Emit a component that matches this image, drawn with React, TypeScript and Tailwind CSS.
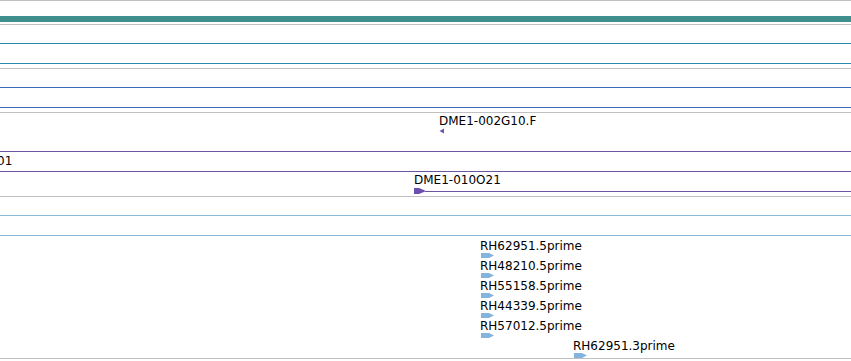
import React from "react";

const rows = [
  { label: "RH62951.5prime", x: "ml-[481px]" },
  { label: "RH48210.5prime", x: "ml-[481px]" },
  { label: "RH55158.5prime", x: "ml-[481px]" },
  { label: "RH44339.5prime", x: "ml-[481px]" },
  { label: "RH57012.5prime", x: "ml-[481px]" },
  { label: "RH62951.3prime", x: "ml-[574px]" },
];

function BlueArrow() {
  return (
    <svg width="14" height="5" viewBox="0 0 14 5" className="block">
      <polygon points="0,0 8,0 13,2.5 8,5 0,5" fill="#82b4de" />
    </svg>
  );
}

export default function App() {
  return (
    <div
      className="w-[851px] h-[361px] bg-white overflow-hidden flex flex-col text-[12px] leading-[14px] text-black"
      style={{ fontFamily: '"DejaVu Sans", sans-serif' }}
    >
      <div className="h-px bg-[#c0c0c0]" />
      <div className="pt-[15px] pb-[2px]">
        <div className="h-[6px] bg-[#3f8f8f]" />
      </div>
      <div className="h-px bg-[#c0c0c0]" />

      <div className="pt-[18px] pb-[4px]">
        <div className="h-[21px] border-y border-[#2a8caa]" />
      </div>
      <div className="h-px bg-[#c0c0c0]" />

      <div className="pt-[18px] pb-[4px]">
        <div className="h-[21px] border-y border-[#3c69b8]" />
      </div>
      <div className="h-px bg-[#c0c0c0]" />

      <div className="h-[38px] pt-[1px] flex flex-col">
        <div className="ml-[439px] whitespace-nowrap">DME1-002G10.F</div>
        <svg width="6" height="6" viewBox="0 0 6 6" className="block ml-[439px]">
          <polygon points="0.5,3 5,0.5 5,5.5" fill="#7050b0" />
        </svg>
      </div>
      <div className="h-[21px] border-y border-[#6b55a3] pt-[2px] overflow-hidden">
        <div className="-ml-[3px] whitespace-nowrap">01</div>
      </div>
      <div className="h-[24px] pt-[1px] flex flex-col">
        <div className="ml-[414px] whitespace-nowrap">DME1-010O21</div>
        <div className="ml-[414px] mt-[1px] h-[6px] flex items-start">
          <svg width="11" height="6" viewBox="0 0 11 6" className="block shrink-0">
            <polygon points="0,0 5,0 11,2.5 11,3.5 5,6 0,6" fill="#6a4fb0" />
          </svg>
          <div className="flex-1 h-px mt-[2.5px] bg-[#6b55a3]" />
        </div>
      </div>
      <div className="h-px bg-[#c0c0c0]" />

      <div className="pt-[18px]">
        <div className="h-[21px] border-y border-[#8ab8d8]" />
      </div>
      <div className="pt-[3px] flex flex-col gap-[1px]">
        {rows.map((r) => (
          <div key={r.label} className={`${r.x} flex flex-col`}>
            <div className="whitespace-nowrap -ml-[1px]">{r.label}</div>
            <BlueArrow />
          </div>
        ))}
      </div>
      <div className="h-px bg-[#c0c0c0]" />
    </div>
  );
}
